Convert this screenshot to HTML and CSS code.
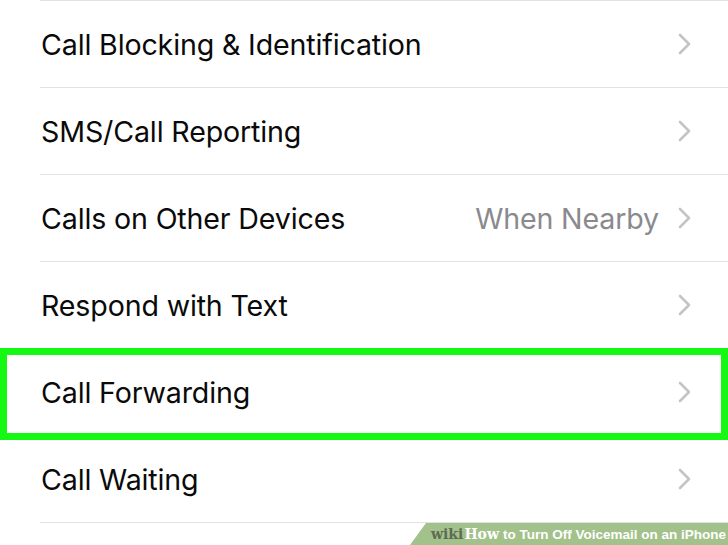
FILE: index.html
```html
<!DOCTYPE html>
<html>
<head>
<meta charset="utf-8">
<link rel="stylesheet" href="styles.css">
</head>
<body>
<div class="screen">
  <div class="list">
    <div class="row"><span class="label">Call Blocking &amp; Identification</span><span class="right"><svg class="chev" width="14" height="22" viewBox="0 0 14 22"><polyline points="2,2 11,11 2,20" /></svg></span></div>
    <div class="row"><span class="label">SMS/Call Reporting</span><span class="right"><svg class="chev" width="14" height="22" viewBox="0 0 14 22"><polyline points="2,2 11,11 2,20" /></svg></span></div>
    <div class="row"><span class="label">Calls on Other Devices</span><span class="right"><span class="value">When Nearby</span><svg class="chev" width="14" height="22" viewBox="0 0 14 22"><polyline points="2,2 11,11 2,20" /></svg></span></div>
    <div class="row"><span class="label">Respond with Text</span><span class="right"><svg class="chev" width="14" height="22" viewBox="0 0 14 22"><polyline points="2,2 11,11 2,20" /></svg></span></div>
    <div class="row"><span class="label">Call Forwarding</span><span class="right"><svg class="chev" width="14" height="22" viewBox="0 0 14 22"><polyline points="2,2 11,11 2,20" /></svg></span></div>
    <div class="row"><span class="label">Call Waiting</span><span class="right"><svg class="chev" width="14" height="22" viewBox="0 0 14 22"><polyline points="2,2 11,11 2,20" /></svg></span></div>
    <div class="row"></div>
  </div>
  <div class="highlight"></div>
  <div class="banner"><span class="wiki">wiki</span><span class="how">How</span><span class="title">to Turn Off Voicemail on an iPhone</span></div>
</div>
</body>
</html>
```
FILE: styles.css
```css
html, body {
  margin: 0;
  padding: 0;
  background: #ffffff;
}
.screen {
  position: relative;
  width: 728px;
  height: 545px;
  overflow: hidden;
  background: #ffffff;
  font-family: Inter, "Noto Sans", sans-serif;
}
.list {
  display: flex;
  flex-direction: column;
}
.row {
  display: flex;
  align-items: center;
  justify-content: space-between;
  height: 86px;
  margin-left: 40px;
  padding-left: 1px;
  padding-right: 36px;
  border-top: 1px solid #e2e2e4;
  flex-shrink: 0;
}
.label {
  font-size: 28.6px;
  color: #0a0a0a;
  letter-spacing: -0.15px;
}
.right {
  display: flex;
  align-items: center;
  gap: 19px;
}
.value {
  font-size: 28.6px;
  color: #8a8a8e;
  letter-spacing: -0.15px;
}
.chev polyline {
  fill: none;
  stroke: #c4c4c8;
  stroke-width: 2.6;
  stroke-linecap: round;
  stroke-linejoin: round;
}
.highlight {
  position: absolute;
  left: 0;
  top: 348px;
  width: 728px;
  height: 92px;
  box-sizing: border-box;
  border: 7px solid #14f814;
}
.banner {
  position: absolute;
  right: 0;
  bottom: 0;
  width: 318px;
  height: 22px;
  background: #a3c18b;
  clip-path: polygon(16px 0, 100% 0, 100% 100%, 0 100%);
  display: flex;
  align-items: center;
  padding-left: 21px;
  box-sizing: border-box;
  font-size: 13.5px;
  font-weight: bold;
  white-space: nowrap;
}
.wiki {
  font-family: "DejaVu Serif", "Liberation Serif", serif;
  color: #5e6b55;
  font-size: 14px;
}
.how {
  font-family: "DejaVu Serif", "Liberation Serif", serif;
  color: #ffffff;
  font-size: 14px;
  margin-left: 1px;
}
.title {
  font-family: "Liberation Sans", Arial, sans-serif;
  color: #ffffff;
  margin-left: 4px;
}
```
